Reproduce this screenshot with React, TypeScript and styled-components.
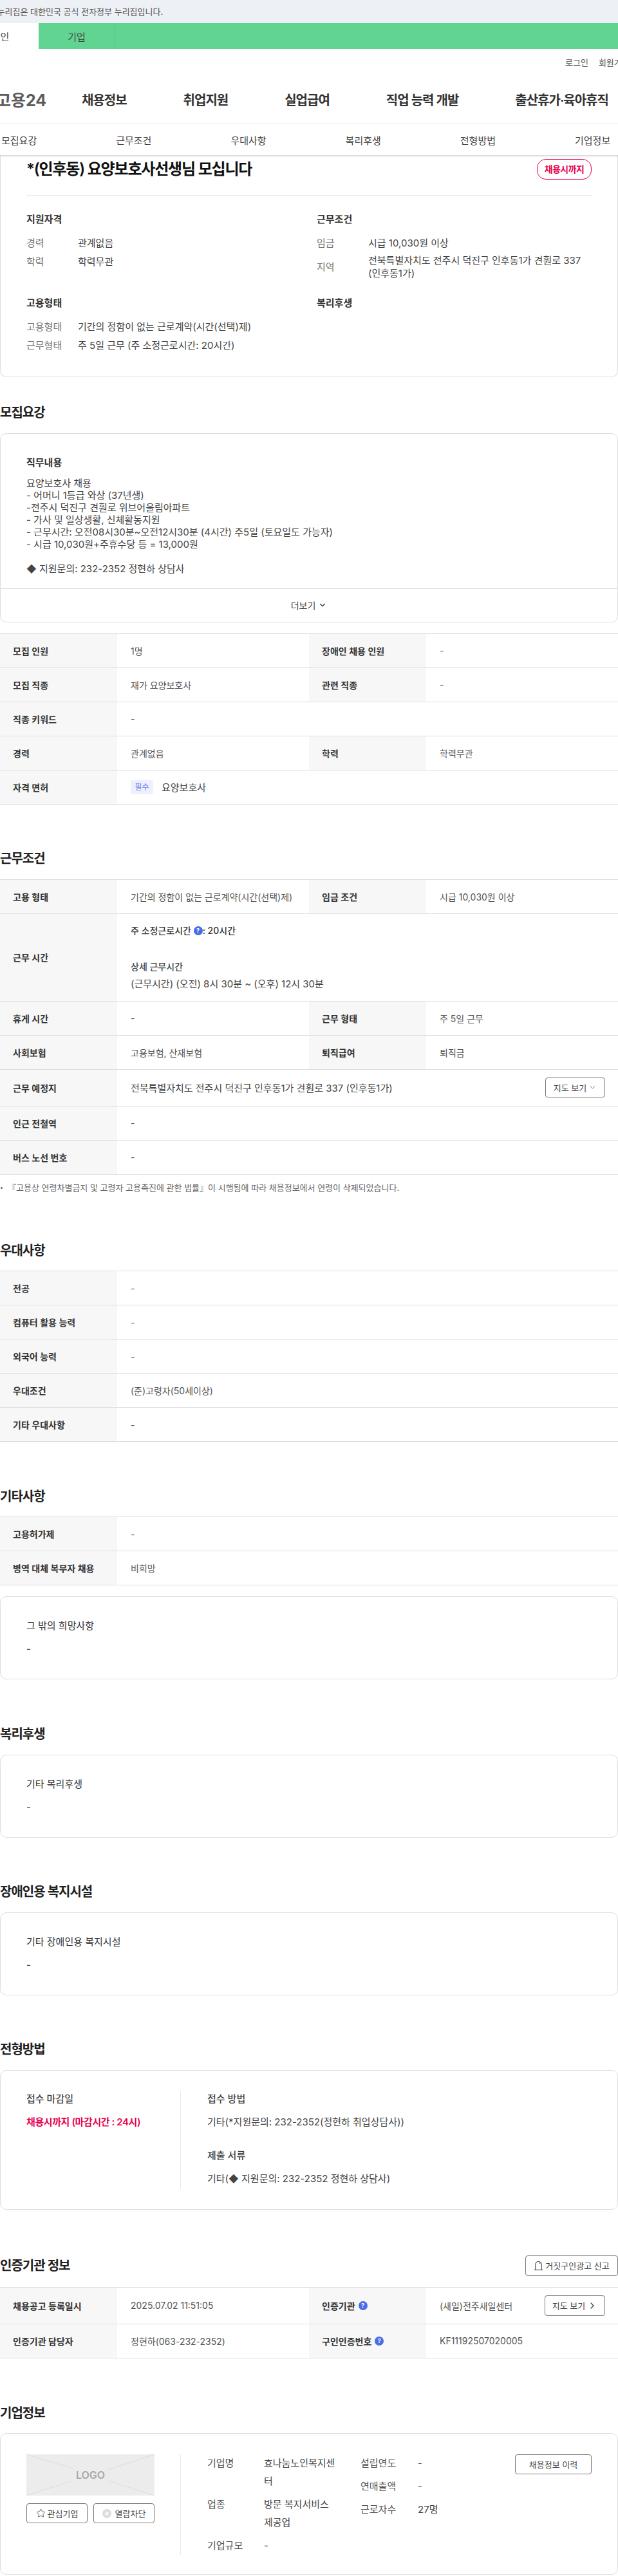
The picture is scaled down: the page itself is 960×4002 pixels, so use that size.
import React from "react";
import styled, { createGlobalStyle } from "styled-components";
import { ChevronDown, ChevronRight, Star } from "lucide-react";

const GlobalStyle = createGlobalStyle`
  * { box-sizing: border-box; }
  html, body { margin: 0; padding: 0; background: #fff; }
  body {
    font-family: Inter, "Noto Sans CJK KR", "Noto Sans", sans-serif;
    color: #333;
    overflow-x: hidden;
  }
`;

const Page = styled.div`
  width: 960px;
  height: 4002px;
  overflow: hidden;
`;

/* ---------- header ---------- */
const Header = styled.header`
  position: relative;
  z-index: 2;
  background: #fff;
  box-shadow: 0 1px 3px rgba(0, 0, 0, 0.22);
`;

const GovStrip = styled.div`
  height: 36px;
  line-height: 36px;
  background: #edf0f5;
  font-size: 13px;
  color: #555;
  white-space: nowrap;
  span { margin-left: -20px; }
`;

const TabBar = styled.div`
  display: flex;
  height: 40px;
  background: #62d491;
  margin-left: -59px;
`;

const Tab = styled.div<{ $active?: boolean }>`
  width: 119px;
  display: flex;
  align-items: center;
  justify-content: center;
  font-size: 15px;
  color: #444;
  background: ${(p) => (p.$active ? "#fff" : "transparent")};
  border-right: ${(p) => (p.$active ? "none" : "1px solid #55c584")};
`;

const UtilRow = styled.div`
  display: flex;
  height: 40px;
  align-items: center;
  gap: 16px;
  padding-left: 878px;
  font-size: 13px;
  color: #555;
  white-space: nowrap;
`;

const NavRow = styled.nav`
  display: flex;
  align-items: center;
  height: 77px;
  border-bottom: 1px solid #e6e6e6;
  white-space: nowrap;
`;

const Logo = styled.div`
  width: 133px;
  margin-left: -6px;
  flex: none;
  font-size: 25px;
  font-weight: 700;
  color: #5c5c5c;
`;

const NavItem = styled.a`
  margin-right: 88px;
  font-size: 20px;
  font-weight: 600;
  letter-spacing: -1px;
  color: #333;
  flex: none;
`;

const SubNav = styled.div`
  display: flex;
  align-items: center;
  gap: 123px;
  height: 48px;
  padding-left: 2px;
  font-size: 15px;
  color: #444;
  white-space: nowrap;
`;

/* ---------- cards ---------- */
const Card = styled.div`
  border: 1px solid #dedede;
  border-radius: 10px;
  background: #fff;
`;

const SummaryCard = styled(Card)`
  height: 345px;
  border-top: none;
  border-radius: 0 0 10px 10px;
  padding: 6px 40px 0;
`;

const TitleRow = styled.div`
  display: flex;
  justify-content: space-between;
  align-items: flex-start;
  height: 57px;
  border-bottom: 1px solid #e8e8e8;
`;

const Title = styled.h1`
  margin: 0;
  font-size: 24px;
  line-height: 32px;
  font-weight: 600;
  letter-spacing: -1.2px;
  color: #111;
`;

const DeadlineBadge = styled.div`
  width: 85px;
  height: 32px;
  line-height: 29px;
  text-align: center;
  border: 1px solid #e8004c;
  border-radius: 14px;
  font-size: 14px;
  font-weight: 600;
  letter-spacing: -0.6px;
  color: #e8004c;
`;

const SummaryGrid = styled.div`
  display: grid;
  grid-template-columns: 451px 1fr;
  row-gap: 26px;
  margin-top: 26px;
`;

const SummaryHeading = styled.h3`
  margin: 0 0 14px;
  font-size: 15px;
  line-height: 22px;
  font-weight: 600;
  color: #333;
`;

const InfoRow = styled.div<{ $multi?: boolean }>`
  display: grid;
  grid-template-columns: 80px 1fr;
  align-items: center;
  font-size: 15px;
  line-height: ${(p) => (p.$multi ? "19.5px" : "24px")};
  color: #444;
  & + & { margin-top: ${(p) => (p.$multi ? "5px" : "8px")}; }
`;

const InfoLabel = styled.span`
  color: #777;
`;

const TextCard = styled(Card)`
  padding: 33px 40px 34px;
`;

const TableTextCard = styled(TextCard)`
  margin-top: 17px;
`;

const TextCardLabel = styled.div`
  font-size: 15px;
  line-height: 24px;
  color: #333;
`;

const TextCardValue = styled.div`
  margin-top: 12px;
  font-size: 15px;
  line-height: 24px;
  color: #444;
`;

const DutyCard = styled(Card)`
  overflow: hidden;
`;

const DutyBody = styled.div`
  height: 240px;
  padding: 33px 40px 0;
`;

const DutyTitle = styled.div`
  font-size: 15px;
  line-height: 24px;
  font-weight: 600;
  color: #333;
`;

const DutyText = styled.div`
  margin-top: 10px;
  font-size: 15px;
  line-height: 19px;
  color: #444;
  white-space: pre-line;
`;

const MoreRow = styled.div`
  display: flex;
  align-items: center;
  justify-content: center;
  gap: 4px;
  height: 52px;
  border-top: 1px solid #dedede;
  font-size: 14px;
  color: #444;
`;

/* ---------- sections ---------- */
const Section = styled.section<{ $top?: number }>`
  margin-top: ${(p) => p.$top ?? 70.6}px;
`;

const SectionHeading = styled.h2`
  margin: 0 0 17.6px;
  font-size: 20px;
  line-height: 28px;
  font-weight: 600;
  letter-spacing: -1px;
  color: #222;
`;

const SectionHead = styled.div`
  display: flex;
  justify-content: space-between;
  align-items: center;
  height: 32px;
  margin-bottom: 17px;
  ${SectionHeading} { margin: 0; }
`;

const OutlineButton = styled.button<{ $w: number; $h?: number }>`
  display: inline-flex;
  align-items: center;
  justify-content: center;
  gap: 3px;
  flex: none;
  width: ${(p) => p.$w}px;
  height: ${(p) => p.$h ?? 31}px;
  padding: 0;
  background: #fff;
  border: 1px solid #777;
  border-radius: 4px;
  font-family: inherit;
  font-size: 13px;
  color: #444;
`;

const GridTable = styled.div<{ $gap?: number }>`
  border-top: 1px solid #dedede;
  margin-top: ${(p) => p.$gap ?? 0}px;
`;

const TableRow = styled.div<{ $h?: number }>`
  display: grid;
  grid-template-columns: 182px 298px 182px 298px;
  min-height: ${(p) => p.$h ?? 53}px;
  border-bottom: 1px solid #dedede;
`;

const LabelCell = styled.div`
  display: flex;
  align-items: center;
  gap: 5px;
  padding-left: 20px;
  background: #f7f7f7;
  font-size: 14px;
  font-weight: 600;
  color: #333;
`;

const ValueCell = styled.div<{ $span?: boolean }>`
  display: flex;
  align-items: center;
  padding-left: 21px;
  font-size: 14px;
  color: #555;
  grid-column: ${(p) => (p.$span ? "span 3" : "auto")};
`;

const SpreadValue = styled(ValueCell)`
  justify-content: space-between;
  padding-right: 20px;
`;

const HoursBlock = styled.div`
  grid-column: span 3;
  padding: 14px 0 0 21px;
  font-size: 14px;
  line-height: 24px;
  color: #555;
`;

const HoursStrong = styled.div`
  display: flex;
  align-items: center;
  font-weight: 500;
  color: #333;
`;

const HoursSub = styled.div`
  margin-top: 32px;
  font-weight: 500;
  color: #444;
`;

const HoursText = styled.div`
  margin-top: 3px;
  font-size: 15px;
  color: #444;
`;

const HelpDot = styled.span`
  display: inline-flex;
  align-items: center;
  justify-content: center;
  width: 14px;
  height: 14px;
  border-radius: 50%;
  background: #4a6ce8;
  color: #fff;
  font-size: 9px;
  font-weight: 700;
  line-height: 1;
  flex: none;
`;

const RequiredTag = styled.span`
  display: inline-block;
  width: 35px;
  height: 22px;
  line-height: 22px;
  margin-right: 13px;
  text-align: center;
  background: #eef1fd;
  border-radius: 3px;
  font-size: 12px;
  color: #6a80ef;
`;

const LargeValue = styled.span`
  font-size: 15px;
  color: #444;
`;

const Note = styled.p`
  position: relative;
  margin: 9px 0 0;
  padding-left: 12px;
  font-size: 13px;
  line-height: 22px;
  color: #666;
`;

const NoteDot = styled.i`
  position: absolute;
  left: 1px;
  top: 10px;
  width: 3px;
  height: 3px;
  border-radius: 50%;
  background: #666;
`;

/* ---------- apply / company ---------- */
const SplitCard = styled(Card)`
  display: grid;
  grid-template-columns: 240px 1fr;
  padding: 32px 40px;
`;

const SplitSide = styled.div`
  border-right: 1px solid #e8e8e8;
`;

const SplitMain = styled.div`
  padding-left: 41px;
  display: flex;
  justify-content: space-between;
`;

const ApplyMain = styled.div`
  padding-left: 41px;
`;

const ApplyCard = styled(SplitCard)`
  height: 217px;
`;

const ApplyLabel = styled.div<{ $gap?: number }>`
  margin-top: ${(p) => p.$gap ?? 0}px;
  font-size: 15px;
  line-height: 24px;
  font-weight: 500;
  color: #444;
`;

const ApplyValue = styled.div<{ $alert?: boolean }>`
  margin-top: 12px;
  font-size: 15px;
  line-height: 24px;
  font-weight: ${(p) => (p.$alert ? 600 : 400)};
  letter-spacing: ${(p) => (p.$alert ? "-0.4px" : "0")};
  color: ${(p) => (p.$alert ? "#e8004c" : "#444")};
`;

const CompanyCard = styled(SplitCard)`
  height: 220px;
`;

const LogoBox = styled.div`
  position: relative;
  display: flex;
  align-items: center;
  justify-content: center;
  width: 199px;
  height: 64px;
  background: #ececec;
  font-size: 16px;
  font-weight: 600;
  color: #a9a9a9;
  svg { position: absolute; inset: 0; }
`;

const LogoButtons = styled.div`
  display: flex;
  gap: 8px;
  margin-top: 12px;
  width: 199px;
  justify-content: space-between;
`;

const CompanyFacts = styled.div`
  display: flex;
  flex: none;
`;

const FactColumn = styled.div<{ $w: number; $labelW: number; $valueW: number }>`
  width: ${(p) => p.$w}px;
  display: grid;
  grid-template-columns: ${(p) => p.$labelW}px ${(p) => p.$valueW}px;
  grid-auto-rows: min-content;
  row-gap: 8px;
  font-size: 15px;
  line-height: 28px;
`;

const FactLabel = styled.span`
  color: #555;
`;

const FactValue = styled.span`
  color: #444;
`;

const BlockedIcon = styled.span`
  display: inline-flex;
  width: 14px;
  height: 14px;
  margin-right: 3px;
  svg { display: block; }
`;

/* ---------- data ---------- */
type Pair = [string, React.ReactNode];

const recruitRows: Pair[][] = [
  [["모집 인원", "1명"], ["장애인 채용 인원", "-"]],
  [["모집 직종", "재가 요양보호사"], ["관련 직종", "-"]],
  [["직종 키워드", "-"]],
  [["경력", "관계없음"], ["학력", "학력무관"]],
  [["자격 면허", <><RequiredTag>필수</RequiredTag><LargeValue>요양보호사</LargeValue></>]],
];

const preferRows: Pair[][] = [
  [["전공", "-"]],
  [["컴퓨터 활용 능력", "-"]],
  [["외국어 능력", "-"]],
  [["우대조건", "(준)고령자(50세이상)"]],
  [["기타 우대사항", "-"]],
];

const etcRows: Pair[][] = [
  [["고용허가제", "-"]],
  [["병역 대체 복무자 채용", "비희망"]],
];

const DUTY = `요양보호사 채용
- 어머니 1등급 와상 (37년생)
-전주시 덕진구 견훤로 위브어울림아파트
- 가사 및 일상생활, 신체활동지원
- 근무시간: 오전08시30분~오전12시30분 (4시간) 주5일 (토요일도 가능자)
- 시급 10,030원+주휴수당 등 = 13,000원

◆ 지원문의: 232-2352 정현하 상담사`;

function Rows({ rows }: { rows: Pair[][] }) {
  return (
    <>
      {rows.map((row, i) => (
        <TableRow key={i}>
          {row.map(([label, value]) => (
            <React.Fragment key={label}>
              <LabelCell>{label}</LabelCell>
              <ValueCell $span={row.length === 1}>{value}</ValueCell>
            </React.Fragment>
          ))}
        </TableRow>
      ))}
    </>
  );
}

function BellIcon() {
  return (
    <svg width="15" height="17" viewBox="0 0 15 17" fill="none" stroke="#444" strokeWidth="1.1">
      <path d="M1 15.5h13" />
      <path d="M2.8 15.5V7a4.7 4.7 0 0 1 9.4 0v8.5" />
      <path d="M8.8 4.2a2.6 2.6 0 0 1 1.2 1.6" />
    </svg>
  );
}

function LogoLines() {
  return (
    <svg width="199" height="64" viewBox="0 0 199 64" stroke="#dcdcdc" strokeWidth="1">
      <path d="M0 0L72 22M199 0L127 24M0 64L72 41M199 64L127 41" />
    </svg>
  );
}

export default function App() {
  return (
    <Page>
      <GlobalStyle />
      <Header>
        <GovStrip><span>이 누리집은 대한민국 공식 전자정부 누리집입니다.</span></GovStrip>
        <TabBar>
          <Tab $active>개인</Tab>
          <Tab>기업</Tab>
        </TabBar>
        <UtilRow>
          <span>로그인</span>
          <span>회원가입</span>
        </UtilRow>
        <NavRow>
          <Logo>고용24</Logo>
          <NavItem>채용정보</NavItem>
          <NavItem>취업지원</NavItem>
          <NavItem>실업급여</NavItem>
          <NavItem>직업 능력 개발</NavItem>
          <NavItem>출산휴가·육아휴직</NavItem>
        </NavRow>
        <SubNav>
          <span>모집요강</span>
          <span>근무조건</span>
          <span>우대사항</span>
          <span>복리후생</span>
          <span>전형방법</span>
          <span>기업정보</span>
        </SubNav>
      </Header>

      <SummaryCard>
        <TitleRow>
          <Title>*(인후동) 요양보호사선생님 모십니다</Title>
          <DeadlineBadge>채용시까지</DeadlineBadge>
        </TitleRow>
        <SummaryGrid>
          <div>
            <SummaryHeading>지원자격</SummaryHeading>
            <InfoRow><InfoLabel>경력</InfoLabel><span>관계없음</span></InfoRow>
            <InfoRow><InfoLabel>학력</InfoLabel><span>학력무관</span></InfoRow>
          </div>
          <div>
            <SummaryHeading>근무조건</SummaryHeading>
            <InfoRow><InfoLabel>임금</InfoLabel><span>시급 10,030원 이상</span></InfoRow>
            <InfoRow $multi><InfoLabel>지역</InfoLabel><span>전북특별자치도 전주시 덕진구 인후동1가 견훤로 337 (인후동1가)</span></InfoRow>
          </div>
          <div>
            <SummaryHeading>고용형태</SummaryHeading>
            <InfoRow><InfoLabel>고용형태</InfoLabel><span>기간의 정함이 없는 근로계약(시간(선택)제)</span></InfoRow>
            <InfoRow><InfoLabel>근무형태</InfoLabel><span>주 5일 근무 (주 소정근로시간: 20시간)</span></InfoRow>
          </div>
          <div>
            <SummaryHeading>복리후생</SummaryHeading>
          </div>
        </SummaryGrid>
      </SummaryCard>

      <Section $top={41}>
        <SectionHeading>모집요강</SectionHeading>
        <DutyCard>
          <DutyBody>
            <DutyTitle>직무내용</DutyTitle>
            <DutyText>{DUTY}</DutyText>
          </DutyBody>
          <MoreRow>더보기 <ChevronDown size={14} strokeWidth={2} color="#333" /></MoreRow>
        </DutyCard>
        <GridTable $gap={17}>
          <Rows rows={recruitRows} />
        </GridTable>
      </Section>

      <Section>
        <SectionHeading>근무조건</SectionHeading>
        <GridTable>
          <Rows rows={[[["고용 형태", "기간의 정함이 없는 근로계약(시간(선택)제)"], ["임금 조건", "시급 10,030원 이상"]]]} />
          <TableRow $h={136}>
            <LabelCell>근무 시간</LabelCell>
            <HoursBlock>
              <HoursStrong>주 소정근로시간&nbsp;<HelpDot>?</HelpDot>: 20시간</HoursStrong>
              <HoursSub>상세 근무시간</HoursSub>
              <HoursText>(근무시간) (오전) 8시 30분 ~ (오후) 12시 30분</HoursText>
            </HoursBlock>
          </TableRow>
          <Rows rows={[
            [["휴게 시간", "-"], ["근무 형태", "주 5일 근무"]],
            [["사회보험", "고용보험, 산재보험"], ["퇴직급여", "퇴직금"]],
          ]} />
          <TableRow $h={57}>
            <LabelCell>근무 예정지</LabelCell>
            <SpreadValue $span>
              <LargeValue>전북특별자치도 전주시 덕진구 인후동1가 견훤로 337 (인후동1가)</LargeValue>
              <OutlineButton $w={93}>지도 보기 <ChevronDown size={13} strokeWidth={1.5} /></OutlineButton>
            </SpreadValue>
          </TableRow>
          <Rows rows={[[["인근 전철역", "-"]], [["버스 노선 번호", "-"]]]} />
        </GridTable>
        <Note><NoteDot />『고용상 연령차별금지 및 고령자 고용촉진에 관한 법률』이 시행됨에 따라 채용정보에서 연령이 삭제되었습니다.</Note>
      </Section>

      <Section $top={72.8}>
        <SectionHeading>우대사항</SectionHeading>
        <GridTable>
          <Rows rows={preferRows} />
        </GridTable>
      </Section>

      <Section>
        <SectionHeading>기타사항</SectionHeading>
        <GridTable>
          <Rows rows={etcRows} />
        </GridTable>
        <TableTextCard>
          <TextCardLabel>그 밖의 희망사항</TextCardLabel>
          <TextCardValue>-</TextCardValue>
        </TableTextCard>
      </Section>

      <Section>
        <SectionHeading>복리후생</SectionHeading>
        <TextCard>
          <TextCardLabel>기타 복리후생</TextCardLabel>
          <TextCardValue>-</TextCardValue>
        </TextCard>
      </Section>

      <Section>
        <SectionHeading>장애인용 복지시설</SectionHeading>
        <TextCard>
          <TextCardLabel>기타 장애인용 복지시설</TextCardLabel>
          <TextCardValue>-</TextCardValue>
        </TextCard>
      </Section>

      <Section>
        <SectionHeading>전형방법</SectionHeading>
        <ApplyCard>
          <SplitSide>
            <ApplyLabel>접수 마감일</ApplyLabel>
            <ApplyValue $alert>채용시까지 (마감시간 : 24시)</ApplyValue>
          </SplitSide>
          <ApplyMain>
            <ApplyLabel>접수 방법</ApplyLabel>
            <ApplyValue>기타(*지원문의: 232-2352(정현하 취업상담사))</ApplyValue>
            <ApplyLabel $gap={28}>제출 서류</ApplyLabel>
            <ApplyValue>기타(◆ 지원문의: 232-2352 정현하 상담사)</ApplyValue>
          </ApplyMain>
        </ApplyCard>
      </Section>

      <Section $top={71}>
        <SectionHead>
          <SectionHeading>인증기관 정보</SectionHeading>
          <OutlineButton $w={144} $h={32}><BellIcon /> 거짓구인광고 신고</OutlineButton>
        </SectionHead>
        <GridTable>
          <TableRow $h={57}>
            <LabelCell>채용공고 등록일시</LabelCell>
            <ValueCell>2025.07.02 11:51:05</ValueCell>
            <LabelCell>인증기관<HelpDot>?</HelpDot></LabelCell>
            <SpreadValue>
              (새일)전주새일센터
              <OutlineButton $w={94} $h={32}>지도 보기 <ChevronRight size={16} strokeWidth={2} /></OutlineButton>
            </SpreadValue>
          </TableRow>
          <TableRow>
            <LabelCell>인증기관 담당자</LabelCell>
            <ValueCell>정현하(063-232-2352)</ValueCell>
            <LabelCell>구인인증번호<HelpDot>?</HelpDot></LabelCell>
            <ValueCell>KF11192507020005</ValueCell>
          </TableRow>
        </GridTable>
      </Section>

      <Section>
        <SectionHeading>기업정보</SectionHeading>
        <CompanyCard>
          <SplitSide>
            <LogoBox><LogoLines />LOGO</LogoBox>
            <LogoButtons>
              <OutlineButton $w={95}><Star size={15} strokeWidth={1.3} /> 관심기업</OutlineButton>
              <OutlineButton $w={95}>
                <BlockedIcon>
                  <svg width="14" height="14" viewBox="0 0 14 14">
                    <circle cx="7" cy="7" r="7" fill="#dcdcdc" />
                    <path d="M4.5 4.5l5 5M9.5 4.5l-5 5" stroke="#fff" strokeWidth="1.4" />
                  </svg>
                </BlockedIcon>
                열람차단
              </OutlineButton>
            </LogoButtons>
          </SplitSide>
          <SplitMain>
            <CompanyFacts>
              <FactColumn $w={238} $labelW={88} $valueW={115}>
                <FactLabel>기업명</FactLabel><FactValue>효나눔노인복지센터</FactValue>
                <FactLabel>업종</FactLabel><FactValue>방문 복지서비스 제공업</FactValue>
                <FactLabel>기업규모</FactLabel><FactValue>-</FactValue>
              </FactColumn>
              <FactColumn $w={160} $labelW={89} $valueW={60}>
                <FactLabel>설립연도</FactLabel><FactValue>-</FactValue>
                <FactLabel>연매출액</FactLabel><FactValue>-</FactValue>
                <FactLabel>근로자수</FactLabel><FactValue>27명</FactValue>
              </FactColumn>
            </CompanyFacts>
            <OutlineButton $w={119}>채용정보 이력</OutlineButton>
          </SplitMain>
        </CompanyCard>
      </Section>
    </Page>
  );
}
